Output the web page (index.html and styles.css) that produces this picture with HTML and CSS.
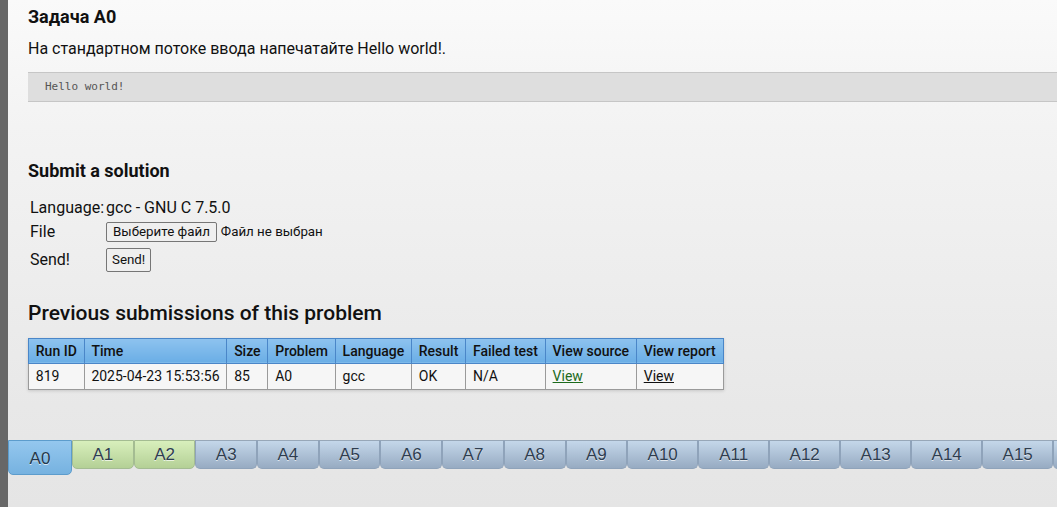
FILE: index.html
```html
<!DOCTYPE html>
<html lang="ru">
<head>
<meta charset="utf-8">
<title>Задача A0</title>
<link rel="stylesheet" href="styles.css">
</head>
<body>
<div class="page">
  <div class="strip"></div>
  <div class="main">
    <div class="content">
      <h3 class="title">Задача A0</h3>
      <p class="statement">На стандартном потоке ввода напечатайте Hello world!.</p>
      <pre class="sample">Hello world!</pre>

      <h3 class="submit-title">Submit a solution</h3>
      <table class="form">
        <tr class="r1"><td class="lbl">Language:</td><td>gcc - GNU C 7.5.0</td></tr>
        <tr class="r2"><td class="lbl">File</td><td><span class="btn">Выберите файл</span> <span class="nofile">Файл не выбран</span></td></tr>
        <tr class="r3"><td class="lbl">Send!</td><td><span class="btn send">Send!</span></td></tr>
      </table>

      <h2 class="prev-title">Previous submissions of this problem</h2>
      <table class="runs">
        <thead>
          <tr><th>Run ID</th><th>Time</th><th>Size</th><th>Problem</th><th>Language</th><th>Result</th><th>Failed test</th><th>View source</th><th>View report</th></tr>
        </thead>
        <tbody>
          <tr><td>819</td><td>2025-04-23 15:53:56</td><td>85</td><td>A0</td><td>gcc</td><td>OK</td><td>N/A</td><td><a class="src" href="#">View</a></td><td><a class="rep" href="#">View</a></td></tr>
        </tbody>
      </table>
    </div>
    <div class="tabs">
      <div class="tab active">A0</div>
      <div class="tab ok">A1</div>
      <div class="tab ok">A2</div>
      <div class="tab">A3</div>
      <div class="tab">A4</div>
      <div class="tab">A5</div>
      <div class="tab">A6</div>
      <div class="tab">A7</div>
      <div class="tab">A8</div>
      <div class="tab">A9</div>
      <div class="tab wide">A10</div>
      <div class="tab wide">A11</div>
      <div class="tab wide">A12</div>
      <div class="tab wide">A13</div>
      <div class="tab wide">A14</div>
      <div class="tab wide">A15</div>
      <div class="tab wide" aria-hidden="true"></div>
    </div>
  </div>
</div>
</body>
</html>
```

FILE: styles.css
```css
html, body {
  margin: 0;
  padding: 0;
  height: 100%;
  overflow: hidden;
}
body {
  font-family: Roboto, "Noto Sans", sans-serif;
  color: #111;
}
.page {
  display: flex;
  height: 507px;
}
.strip {
  width: 8px;
  flex: none;
  background: #676767;
}
.main {
  flex: 1;
  min-width: 0;
  background: linear-gradient(to bottom, #fafafa 0%, #f3f3f3 25%, #e8e8e8 80%, #e5e5e5 100%);
  display: flex;
  flex-direction: column;
}
.content {
  padding-left: 20px;
  height: 440px;
}
.title {
  font-size: 18px;
  font-weight: bold;
  margin: 7px 0 0 0;
  line-height: 20px;
}
.statement {
  font-size: 16px;
  margin: 12px 0 0 0;
  line-height: 20px;
}
.sample {
  margin: 13px -30px 0 0;
  background: #dedede;
  border-top: 1px solid #c6c6c6;
  border-bottom: 1px solid #c6c6c6;
  height: 28px;
  line-height: 28px;
  padding: 0 0 0 17px;
  font-family: "DejaVu Sans Mono", monospace;
  font-size: 11px;
  color: #555;
}
.submit-title {
  font-size: 18px;
  font-weight: bold;
  margin: 59px 0 0 0;
  line-height: 20px;
}
.form {
  border-collapse: separate;
  border-spacing: 2px;
  margin-top: 12px;
  font-size: 16px;
}
.form td {
  padding: 0;
  vertical-align: middle;
}
.form .r1 td { height: 24px; }
.form .r2 td { height: 20px; }
.form .r3 td { height: 32px; }
.form .lbl {
  width: 74px;
}
.btn {
  display: inline-block;
  box-sizing: border-box;
  font-family: Roboto, sans-serif;
  font-size: 13.33px;
  border: 1px solid #767676;
  border-radius: 2px;
  background: #efefef;
  padding: 0 6px;
  height: 20px;
  line-height: 18px;
  color: #111;
  vertical-align: middle;
}
.btn.send {
  height: 24px;
  line-height: 22px;
  padding: 0 5px;
}
.nofile {
  font-size: 13.33px;
  vertical-align: middle;
}
.prev-title {
  font-size: 21px;
  font-weight: 500;
  margin: 23px 0 0 0;
  line-height: 24px;
}
.runs {
  border-collapse: collapse;
  margin-top: 13px;
  font-size: 14px;
  box-shadow: 0 1px 3px rgba(0,0,0,0.15);
}
.runs th {
  font-weight: 500;
  text-align: left;
  background: linear-gradient(to bottom, #8ec3ef, #6aaee6);
  border: 1px solid #4a86c8;
  padding: 0 6.8px;
  height: 24px;
  color: #111;
}
.runs td {
  background: #f6f6f6;
  border: 1px solid #9a9a9a;
  padding: 0 6.8px;
  height: 25px;
}
.runs a.src {
  color: #1b6a1b;
}
.runs a.rep {
  color: #111;
}
.tabs {
  display: flex;
  align-items: flex-start;
  white-space: nowrap;
}
.tab {
  flex: none;
  width: 61.7px;
  height: 29px;
  box-sizing: border-box;
  text-align: center;
  font-family: "Liberation Sans", Arial, sans-serif;
  font-size: 17px;
  line-height: 28px;
  color: #2e3d50;
  text-shadow: 0 1px 0 rgba(255,255,255,0.7);
  background: linear-gradient(to bottom, #c4d7ea, #97abc2);
  border: 1px solid #8fa3ba;
  border-top-color: #97a7b8;
  border-radius: 0 0 5px 5px;
}
.tab.ok {
  background: linear-gradient(to bottom, #d8efbc, #b4d096);
  border-color: #a4bc92;
}
.tab.active {
  width: 64px;
  height: 35px;
  line-height: 36px;
  background: linear-gradient(to bottom, #94c7ee, #76b2e0);
  border-color: #5c9ccc;
  color: #23374c;
}
.tab.wide {
  width: 71px;
}
```
